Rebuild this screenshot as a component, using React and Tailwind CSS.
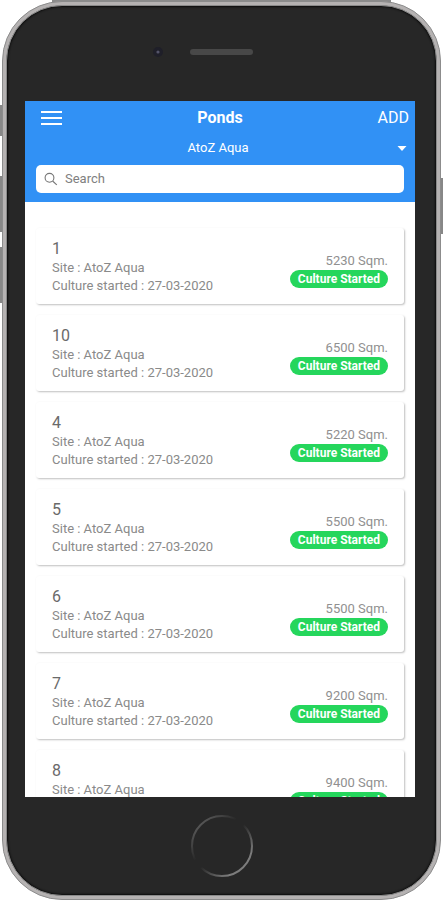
import React, { useState } from 'react';

const ponds = [
  { name: '1', area: '5230 Sqm.' },
  { name: '10', area: '6500 Sqm.' },
  { name: '4', area: '5220 Sqm.' },
  { name: '5', area: '5500 Sqm.' },
  { name: '6', area: '5500 Sqm.' },
  { name: '7', area: '9200 Sqm.' },
  { name: '8', area: '9400 Sqm.' },
];

const PondCard = ({ pond }) => (
  <li className="flex shrink-0 items-start justify-between rounded-[3px] bg-white px-4 pt-[11px] pb-[9px] shadow-[1px_1px_2px_rgba(0,0,0,0.25)]">
    <div className="text-[13px] leading-[18px] text-[#8a8a8a]">
      <h2 className="text-base leading-5 text-[#6a6a6a]">{pond.name}</h2>
      <p>Site : AtoZ Aqua</p>
      <p>Culture started : 27-03-2020</p>
    </div>
    <div className="flex flex-col items-end pt-[13px]">
      <p className="text-[13px] leading-[18px] text-[#909090]">{pond.area}</p>
      <span className="rounded-full bg-[#25d65c] px-2 text-xs leading-[18px] font-bold text-white">Culture Started</span>
    </div>
  </li>
);

const Header = () => {
  const [search, setSearch] = useState('');

  return (
    <header className="shrink-0 bg-[#3191f5] px-[11px] pb-[9px] text-white">
      <div className="grid h-[34px] grid-cols-3 items-center">
        <button aria-label="Menu" className="ml-[5px] flex w-[21px] flex-col gap-1">
          <span className="h-[2px] w-full bg-white" />
          <span className="h-[2px] w-full bg-white" />
          <span className="h-[2px] w-full bg-white" />
        </button>
        <h1 className="text-center text-base font-bold">Ponds</h1>
        <button className="-mr-[5px] justify-self-end text-base">ADD</button>
      </div>

      <div className="relative flex h-[30px] items-center pb-[4px]">
        <select aria-label="Site" className="h-6 w-full appearance-none bg-transparent pr-1 text-center text-[13px] text-white outline-none">
          <option>AtoZ Aqua</option>
        </select>
        <svg className="pointer-events-none absolute right-[-3px]" width="10" height="5" viewBox="0 0 10 5">
          <path d="M0.5 0h9L5 5z" fill="white" />
        </svg>
      </div>

      <label className="flex h-7 items-center gap-[7px] rounded-[5px] bg-white px-2">
        <svg width="14" height="14" viewBox="0 0 14 14" fill="none" stroke="#777" strokeWidth="1.1">
          <circle cx="5.5" cy="5.8" r="4.4" />
          <path d="M8.6 9l4.2 3.8" />
        </svg>
        <input
          type="text"
          aria-label="Search"
          placeholder="Search"
          value={search}
          onChange={(e) => setSearch(e.target.value)}
          className="min-w-0 flex-1 bg-transparent text-[13px] text-[#555] outline-none placeholder:text-[#808080]"
        />
      </label>
    </header>
  );
};

const App = () => {
  return (
    <div className="relative flex h-screen flex-col bg-white px-[2px] font-['Roboto',sans-serif]">
      {/* side buttons and top edge of the phone */}
      <div className="absolute top-0 right-[52px] left-[52px] h-[3px] bg-[#8b8b8b]" />
      <div className="absolute top-[105px] left-0 h-[31px] w-[3px] bg-[#878787]" />
      <div className="absolute top-[176px] left-0 h-[56px] w-[3px] bg-[#878787]" />
      <div className="absolute top-[247px] left-0 h-[56px] w-[3px] bg-[#878787]" />
      <div className="absolute top-[178px] right-0 h-[56px] w-[3px] bg-[#878787]" />

      <div className="relative mt-px flex min-h-0 flex-1 flex-col rounded-[60px] border border-[#8c8c8c] bg-[#b5b2b2] p-[3px]">
        <div className="flex min-h-0 flex-1 flex-col rounded-[56px] border border-[#8a8a8a] bg-[#272727] shadow-[inset_0_0_2px_1px_#0c0c0c]">
          <div className="relative flex h-[95px] shrink-0 justify-center pt-[43px]">
            <svg className="absolute left-[calc(50%-70px)] top-[40px]" width="12" height="12" viewBox="0 0 12 12">
              <circle cx="6" cy="6" r="5" fill="#1f1f29" />
              <circle cx="6" cy="6" r="1.6" fill="#545469" />
            </svg>
            <div className="h-[6px] w-[63px] rounded-full bg-[#484848]" />
          </div>

          <main className="mr-[21px] ml-[18px] flex min-h-0 flex-1 flex-col overflow-hidden bg-white">
            <Header />
            <ul className="flex min-h-0 flex-1 flex-col gap-[11px] overflow-hidden px-[11px] pt-[26px]">
              {ponds.map((pond) => (
                <PondCard key={pond.name} pond={pond} />
              ))}
            </ul>
          </main>

          <div className="flex h-[98px] shrink-0 items-center justify-center">
            <button aria-label="Home" className="size-[62px] rounded-full">
              <svg width="62" height="62" viewBox="0 0 62 62" fill="none">
                <defs>
                  <linearGradient id="ring" x1="0" y1="0" x2="1" y2="1">
                    <stop offset="0.1" stopColor="#5c5c5c" />
                    <stop offset="0.4" stopColor="#272727" />
                    <stop offset="0.5" stopColor="#272727" />
                    <stop offset="0.8" stopColor="#7c7c7c" />
                  </linearGradient>
                </defs>
                <circle cx="31" cy="31" r="30" stroke="url(#ring)" strokeWidth="2" />
              </svg>
            </button>
          </div>
        </div>
      </div>
    </div>
  );
};

export default App;
